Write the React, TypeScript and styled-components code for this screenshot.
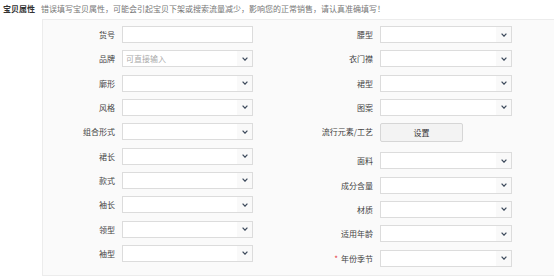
import React from 'react';
import styled, { createGlobalStyle } from 'styled-components';

const GlobalStyle = createGlobalStyle`
  html, body {
    margin: 0;
    padding: 0;
    background: #ffffff;
    font-family: 'Noto Sans CJK SC', 'Liberation Sans', sans-serif;
    overflow: hidden;
  }
`;

const Page = styled.div`
  width: 554px;
  height: 279px;
  overflow: hidden;
`;

const Header = styled.div`
  display: flex;
  align-items: center;
  height: 16px;
  padding-left: 3px;
  gap: 6px;
  font-size: 8px;
`;

const Title = styled.span`
  color: #333;
  font-weight: 700;
`;

const Hint = styled.span`
  color: #777;
`;

const Panel = styled.div`
  margin-top: 3px;
  margin-left: 42px;
  box-sizing: border-box;
  background: #fafafa;
  border: 1px solid #ececec;
  border-right: none;
  padding: 6px 0 8px 0;
  display: flex;
  align-items: flex-start;
`;

const Column = styled.div<{ $labelWidth: number }>`
  display: grid;
  grid-template-columns: ${p => p.$labelWidth}px auto;
  column-gap: 7px;
  row-gap: 7.33px;
  align-items: center;
`;

const Label = styled.div<{ $tall?: boolean }>`
  font-size: 8px;
  color: #444;
  text-align: right;
  white-space: nowrap;
  height: ${p => (p.$tall ? '21.7px' : '17px')};
  line-height: ${p => (p.$tall ? '18px' : '17px')};
`;

const Star = styled.span`
  color: #e4393c;
  margin-right: 3px;
`;

const Box = styled.div<{ $w: number }>`
  width: ${p => p.$w}px;
  height: 17px;
  box-sizing: border-box;
  border: 1px solid #dcdcdc;
  background: #fff;
  display: flex;
  align-items: center;
  font-size: 8px;
`;

const Placeholder = styled.span`
  flex: 1;
  padding-left: 3px;
  color: #aaa;
`;

const Arrow = styled.span`
  margin-left: auto;
  width: 15px;
  height: 100%;
  display: flex;
  align-items: center;
  justify-content: center;
  background: #f9f9f9;
`;

const ButtonCell = styled.div`
  height: 21.7px;
`;

const SetButton = styled.div`
  width: 83px;
  height: 19px;
  box-sizing: border-box;
  border: 1px solid #d6d6d6;
  border-radius: 2px;
  background: #f3f3f3;
  font-size: 8px;
  color: #333;
  display: flex;
  align-items: center;
  justify-content: center;
`;

const Chevron = () => (
  <svg width="6" height="4" viewBox="0 0 6 4">
    <polyline points="0.6,0.6 3,3.2 5.4,0.6" fill="none" stroke="#3d4a5c" strokeWidth="1.2" />
  </svg>
);

const Select: React.FC<{ w: number; placeholder?: string }> = ({ w, placeholder }) => (
  <Box $w={w}>
    {placeholder && <Placeholder>{placeholder}</Placeholder>}
    <Arrow>
      <Chevron />
    </Arrow>
  </Box>
);

const leftFields = ['品牌', '廓形', '风格', '组合形式', '裙长', '款式', '袖长', '领型', '袖型'];
const rightTop = ['腰型', '衣门襟', '裙型', '图案'];
const rightBottom = ['面料', '成分含量', '材质', '适用年龄'];

export default function App() {
  return (
    <Page>
      <GlobalStyle />
      <Header>
        <Title>宝贝属性</Title>
        <Hint>错误填写宝贝属性，可能会引起宝贝下架或搜索流量减少，影响您的正常销售，请认真准确填写！</Hint>
      </Header>
      <Panel>
        <Column $labelWidth={72}>
          <Label>货号</Label>
          <Box $w={131} />
          {leftFields.map(f => (
            <React.Fragment key={f}>
              <Label>{f}</Label>
              <Select w={131} placeholder={f === '品牌' ? '可直接输入' : undefined} />
            </React.Fragment>
          ))}
        </Column>
        <Column $labelWidth={120}>
          {rightTop.map(f => (
            <React.Fragment key={f}>
              <Label>{f}</Label>
              <Select w={132} />
            </React.Fragment>
          ))}
          <Label $tall>流行元素/工艺</Label>
          <ButtonCell>
            <SetButton>设置</SetButton>
          </ButtonCell>
          {rightBottom.map(f => (
            <React.Fragment key={f}>
              <Label>{f}</Label>
              <Select w={132} />
            </React.Fragment>
          ))}
          <Label>
            <Star>*</Star>年份季节
          </Label>
          <Select w={132} />
        </Column>
      </Panel>
    </Page>
  );
}
